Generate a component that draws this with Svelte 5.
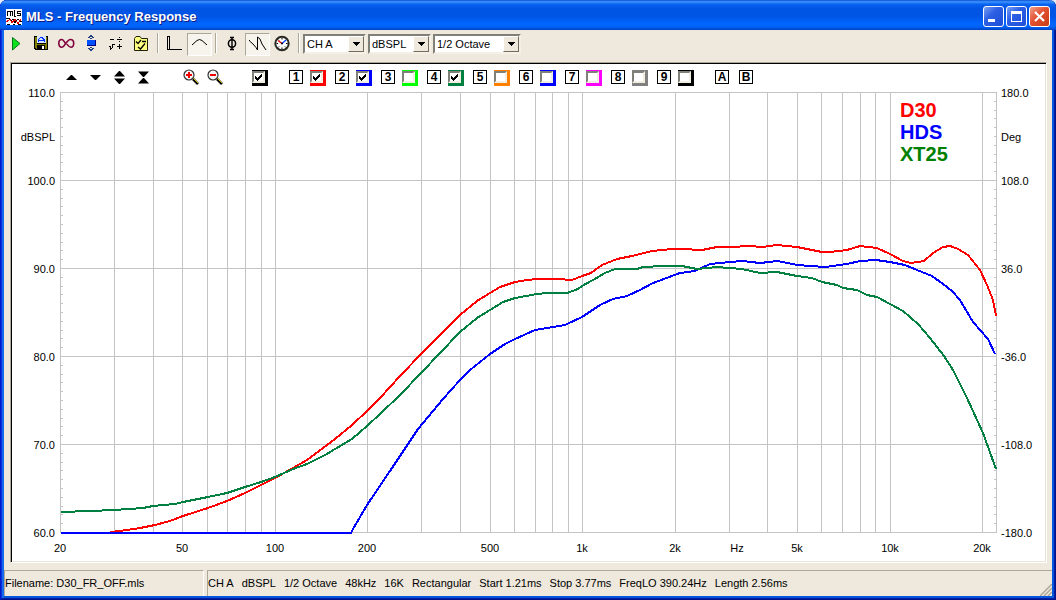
<script lang="ts">
  type Channel = { id: number; color: string; on: boolean };
  type Trace = { name: string; color: string; ink: string; points: string };

  const channels: Channel[] = $state([
    { id: 1, color: '#ff0000', on: true },
    { id: 2, color: '#0000ff', on: true },
    { id: 3, color: '#00ff00', on: false },
    { id: 4, color: '#008040', on: true },
    { id: 5, color: '#ff8000', on: false },
    { id: 6, color: '#0000ff', on: false },
    { id: 7, color: '#ff00ff', on: false },
    { id: 8, color: '#808080', on: false },
    { id: 9, color: '#000000', on: false },
  ]);
  let current = $state(true);

  // trace points live on a 936 x 440 sheet: 20 Hz..22 kHz by 110..60 dB
  const SHEET_W = 936;
  const PLOT_H = 440;
  const traces: Trace[] = [
    {
      name: 'D30', color: '#ff0000', ink: '#ff0000',
      points: '50,440 60,439 80,436 95,433 110,429 123,424 148,416 167,409 185,401 201,393 215,386 233,376 247,368 267,353 275,347 292,333 307,319 320,306 340,284 362,261 380,243 400,223 417,209 430,201 440,195 455,190 467,188 477,187 497,187 512,188 522,184 531,181 542,173 557,167 572,164 592,159 612,157 622,157 642,158 657,155 670,155 690,154 702,155 717,153 737,155 762,160 770,160 787,158 800,154 817,156 830,162 843,169 851,171 864,169 873,161 883,155 890,154 898,157 908,163 920,178 927,193 933,208 936,224',
    },
    {
      name: 'HDS', color: '#0000ff', ink: '#0000ff',
      points: '1,441 291,441 293,437 307,413 330,379 358,337 383,307 400,288 410,278 430,262 445,252 455,247 475,238 505,233 522,225 540,213 553,207 567,204 580,198 593,191 620,181 635,179 650,172 660,171 682,169 700,171 718,169 737,173 765,175 787,172 800,169 816,168 830,170 845,173 857,178 872,184 883,192 892,199 900,208 913,230 928,247 935,262',
    },
    {
      name: 'XT25', color: '#008040', ink: '#008000',
      points: '1,420 30,419 54,418 83,416 93,414 115,412 123,410 148,405 167,401 185,395 201,390 215,385 233,377 247,372 267,362 275,357 292,347 307,334 320,322 340,303 362,280 380,261 400,240 417,226 430,218 443,210 455,206 477,202 487,201 507,201 518,197 522,194 533,188 545,181 555,177 577,177 583,175 603,174 622,174 637,177 657,175 682,177 700,181 717,180 737,184 752,186 762,190 777,193 783,196 797,198 807,203 817,205 830,212 843,219 858,232 870,246 884,264 893,278 907,306 923,341 936,377',
    },
  ];

  const DECADES = Math.log10(22200 / 20);
  const freqs = [
    ...[30, 40, 50, 60, 70, 80, 90],
    ...[100, 200, 300, 400, 500, 600, 700, 800, 900],
    ...[1000, 2000, 3000, 4000, 5000, 6000, 7000, 8000, 9000],
    ...[10000, 20000],
  ];
  const freqLabels: [number, string][] = [
    [20, '20'], [50, '50'], [100, '100'], [200, '200'], [500, '500'], [1000, '1k'],
    [2000, '2k'], [3200, 'Hz'], [5000, '5k'], [10000, '10k'], [20000, '20k'],
  ];
  const levels = ['110.0', '100.0', '90.0', '80.0', '70.0', '60.0'];
  const degrees = ['180.0', '108.0', '36.0', '-36.0', '-108.0', '-180.0'];
  const ticks = Array.from({ length: 51 }, (_, i) => i);

  const LEFT = 48;
  const RIGHT = 49;
  let chartW = $state(1033);
  let plotW = $derived(chartW - LEFT - RIGHT);

  function fx(f: number) {
    return LEFT + Math.round((Math.log10(f / 20) / DECADES) * plotW);
  }
  function dy(db: number) {
    return Math.round((db * PLOT_H) / 50);
  }

  const status = ['CH A', 'dBSPL', '1/2 Octave', '48kHz', '16K', 'Rectangular', 'Start 1.21ms', 'Stop 3.77ms', 'FreqLO 390.24Hz', 'Length 2.56ms'];
</script>

{#snippet combo(label: string, options: string[], size: string)}
  <div class="combo {size}">
    <select aria-label={label}>
      {#each options as o}<option>{o}</option>{/each}
    </select>
    <span class="drop" aria-hidden="true">
      <svg width="7" height="4" viewBox="0 0 7 4"><path d="M0 0h7v1h-1v1h-1v1h-1v1h-1v-1h-1v-1h-1v-1h-1z" /></svg>
    </span>
  </div>
{/snippet}

{#snippet tick()}
  <svg class="tick" width="7" height="7" viewBox="0 0 7 7" aria-hidden="true">
    <path d="M0 2h1v1h1v1h1v-1h1v-1h1v-1h1v-1h1v3h-1v1h-1v1h-1v1h-1v1h-1v-1h-1v-1h-1z" />
  </svg>
{/snippet}

<div class="window">
  <header class="titlebar">
    <svg width="16" height="16" viewBox="0 0 16 16" shape-rendering="crispEdges" aria-hidden="true">
      <rect width="16" height="16" fill="#fff" />
      <path d="M1.500 7V2.500H6.500V7M4 2.500V7M8.500 1V7H10M14.500 2.500H11.500V4.500H14.500V6.500H11M0 9.500H3L5 12L7 10L9 14L12 10L14 12H16" fill="none" stroke="#000" />
      <path d="M0 13L4 10.500L6 13.500L9 10.500L12 14.500L15 10" fill="none" stroke="#e00000" />
      <path d="M1 15h3M7 15h2M12 15h3" stroke="#000" />
    </svg>
    <h1>MLS - Frequency Response</h1>
    <div class="caption">
      <button aria-label="Minimize"><svg viewBox="0 0 19 19"><rect x="4" y="12" width="7" height="3" fill="#fff" /></svg></button>
      <button aria-label="Maximize"><svg viewBox="0 0 19 19"><path d="M4 4h11v11h-11zM5 7v7h9v-7z" fill="#fff" fill-rule="evenodd" /></svg></button>
      <button class="close" aria-label="Close"><svg viewBox="0 0 19 19"><path d="M5 5L14 14M14 5L5 14" stroke="#fff" stroke-width="2.200" /></svg></button>
    </div>
  </header>

  <div class="toolbar" role="toolbar" aria-label="Analysis">
    <button aria-label="Run">
      <svg viewBox="0 0 17 17"><path d="M4.500 1.500L12 7.500L4.500 14z" fill="#10e020" stroke="#087818" /></svg>
    </button>
    <button aria-label="Save">
      <svg viewBox="0 0 17 17" shape-rendering="crispEdges">
        <path d="M1 0h14v14h-13l-1-1z" fill="#000" />
        <path d="M2 1h2v7h9v-7h1v12h-2v-4h-8v4h-1l-1-1z" fill="#808000" />
        <rect x="4" y="0" width="9" height="7" fill="#d8e4ff" />
        <path d="M5.500 6V3.500L7.500 1.500H9L11 3.500V6M5.500 4.500H11" fill="none" stroke="#0030ff" />
        <rect x="9" y="10" width="2" height="3" fill="#fff" />
      </svg>
    </button>
    <button aria-label="Loop">
      <svg viewBox="0 0 17 17"><path d="M7.500 7.500C6 5 5 3.500 3.800 3.500C2 3.500 .8 5.200 .8 7.300C.8 9.500 2 11.200 3.800 11.200C7 11.200 8.500 3.500 12.500 3.500C14.500 3.500 15.700 5 15.700 7.200C15.700 9.500 14.500 11.200 12.800 11.200C11.200 11.200 10 9.500 8.800 8" fill="none" stroke="#800040" stroke-width="1.600" /></svg>
    </button>
    <button aria-label="Scale input">
      <svg viewBox="0 0 17 17" shape-rendering="crispEdges">
        <path d="M5 1h1v-1h1v-1h2v1h1v1h1v1h-2v-1h-2v1h-2zM7 2h2v1h-2zM5 12h2v1h2v-1h2v1h-1v1h-1v1h-2v-1h-1v-1h-1zM7 11h2v1h-2z" fill="#204080" />
        <rect x="4" y="4" width="9" height="6" fill="#000080" />
        <rect x="4" y="4" width="8" height="5" fill="#0050ff" />
      </svg>
    </button>
    <button aria-label="Math">
      <svg viewBox="0 0 17 17" shape-rendering="crispEdges"><path d="M2 3h4v1h-4zM9 3h5v1h-5zM11 1h1v1h-1zM11 5h1v1h-1zM1 10h2v3h-1v-2h-1zM3 12h1v1h-1v1h-1v-1h1zM4 8h3v1h-2v3h-1zM9 10h5v1h-5zM11 8h1v5h-1z" /></svg>
    </button>
    <button aria-label="Options">
      <svg viewBox="0 0 17 17">
        <path d="M1.500 2.500L3 .5H7L8.500 2.500H14.500V14.500H1.500z" fill="#ffff80" stroke="#202000" />
        <path d="M3 5.500L5 7.500L8 4M9 5.500h4M5 11L7.500 13L12 7.500" fill="none" stroke="#000" stroke-width="1.300" />
      </svg>
    </button>
    <span class="sep"></span>
    <button aria-label="Time domain">
      <svg viewBox="0 0 17 17" shape-rendering="crispEdges"><path d="M1.500 0V13.500H16M1 .500H4M3.500 0V13" fill="none" stroke="#000" /></svg>
    </button>
    <button class="pressed" aria-label="Frequency domain" aria-pressed="true">
      <svg viewBox="0 0 17 17"><path d="M1 9L6 4.500Q8.500 2.500 11 4.500L16 9" fill="none" stroke="#000" /></svg>
    </button>
    <span class="sep"></span>
    <button aria-label="Phase">
      <svg viewBox="0 0 17 17"><path d="M8 1V14M6 1.500H10M6 13.500H10" stroke="#000" stroke-width="1.400" /><ellipse cx="8" cy="7.500" rx="3.600" ry="3.800" fill="none" stroke="#000" stroke-width="1.500" /></svg>
    </button>
    <button class="pressed" aria-label="Minimum phase" aria-pressed="true">
      <svg viewBox="0 0 17 17"><path d="M.5 4V5L4 8L7 11.500L8.500 14V1L11 3L13 8L17 14" fill="none" stroke="#000" /></svg>
    </button>
    <button aria-label="Timing">
      <svg viewBox="0 0 17 17">
        <circle cx="8" cy="7.500" r="6.700" fill="#fff" stroke="#282820" stroke-width="2" />
        <path d="M8 2V3.500M8 11.500V13M2.500 7.500H4M12 7.500H13.500M4 3.500L5 4.500M12 11.500L11 10.500M4 11.500L5 10.500" stroke="#000" />
        <path d="M8 7.500L4 4.500" stroke="#f00000" stroke-width="1.300" />
        <path d="M8 7.500L12 4" stroke="#0040ff" stroke-width="1.300" />
        <circle cx="8" cy="7.500" r="1" />
      </svg>
    </button>
    <span class="sep"></span>
    <div class="combos">
      {@render combo('Channel', ['CH A', 'CH B'], 'narrow')}
      {@render combo('Units', ['dBSPL', 'dBV'], 'narrow')}
      {@render combo('Smoothing', ['1/2 Octave', '1/3 Octave'], 'wide')}
    </div>
  </div>

  <main class="panel">
    <div class="controls">
      <div class="group">
        <button aria-label="Shift up"><svg viewBox="0 0 11 13"><path d="M5 4h1l5 5h-11z" /></svg></button>
        <button aria-label="Shift down"><svg viewBox="0 0 11 13"><path d="M0 4h11l-5 5h-1z" /></svg></button>
        <button aria-label="Expand"><svg viewBox="0 0 11 13"><path d="M5 0h1l5 5.500h-11zM0 7.500h11l-5 5.500h-1z" /></svg></button>
        <button aria-label="Compress"><svg viewBox="0 0 11 13"><path d="M0 0.500h11l-5 5.500h-1zM5 7h1l5 5.500h-11z" /></svg></button>
      </div>
      <div class="group zooms">
        {#each ['in', 'out'] as dir}
          <button aria-label="Zoom {dir}">
            <svg class="lens" viewBox="0 0 16 16">
              <path d="M10 10L15 15" stroke="#000" stroke-width="2.600" />
              <path d="M10.500 9.500L15 14" stroke="#e0c000" />
              <circle cx="6" cy="6" r="5" fill="#f4f4f4" stroke="#303030" stroke-width="1.200" />
              <path d={dir === 'in' ? 'M3 6H9M6 3V9' : 'M3 6H9'} stroke="#f00000" stroke-width="2" />
            </svg>
          </button>
        {/each}
      </div>
      <label class="check current">
        <input type="checkbox" bind:checked={current} aria-label="Current measurement" />
        {#if current}{@render tick()}{/if}
      </label>
      <div class="channels">
        {#each channels as ch (ch.id)}
          <div class="channel">
            <button class="key">{ch.id}</button>
            <label class="check" style="background:{ch.color}">
              <input type="checkbox" bind:checked={ch.on} aria-label="Show overlay {ch.id}" />
              {#if ch.on}{@render tick()}{/if}
            </label>
          </div>
        {/each}
      </div>
      <div class="cursors">
        <button class="key">A</button>
        <button class="key">B</button>
      </div>
    </div>

    <div class="chart" bind:clientWidth={chartW}>
      <svg class="plot" width={chartW} height="469" role="img" aria-label="Frequency response">
        <g class="grid">
          {#each freqs as f}
            <path d="M{fx(f) + 0.5} 0v{PLOT_H}" />
          {/each}
          {#each levels as _, i}
            <path d="M{LEFT} {dy(i * 10) + 0.5}h{plotW + 1}" />
          {/each}
          {#each ticks as t}
            <path d="M{LEFT} {dy(t) + 0.5}h3M{LEFT + plotW + 1} {dy(t) + 0.5}h-3" />
          {/each}
          <path d="M{LEFT + 0.5} 0v{PLOT_H}M{LEFT + plotW + 0.5} 0v{PLOT_H + 1}" />
        </g>
        <svg class="traces" x={LEFT} y="0" width={plotW} height={PLOT_H} viewBox="0 0 {SHEET_W} {PLOT_H}" preserveAspectRatio="none">
          {#each traces as t}
            <polyline points={t.points} stroke={t.color} />
          {/each}
        </svg>
        {#each levels as l, i}
          <text class="end" x={LEFT - 5} y={dy(i * 10) + 5}>{l}</text>
        {/each}
        {#each degrees as d, i}
          <text x={LEFT + plotW + 5} y={dy(i * 10) + 5}>{d}</text>
        {/each}
        <text class="end" x={LEFT - 5} y={dy(5) + 5}>dBSPL</text>
        <text x={LEFT + plotW + 5} y={dy(5) + 5}>Deg</text>
        {#each freqLabels as [f, text]}
          <text class="mid" x={fx(f)} y={PLOT_H + 20}>{text}</text>
        {/each}
        {#each traces as t, i}
          <text class="legend" x={LEFT + plotW - 96} y={25 + i * 22} fill={t.ink}>{t.name}</text>
        {/each}
      </svg>
    </div>
  </main>

  <footer class="status">
    <div class="cell file">Filename: D30_FR_OFF.mls</div>
    <div class="cell info">
      {#each status as s}<span>{s}</span>{/each}
    </div>
    <svg class="grip" width="12" height="12" viewBox="0 0 12 12" aria-hidden="true">
      <path d="M0 12L12 0M4 12L12 4M8 12L12 8" stroke="#aca899" stroke-width="1.500" />
    </svg>
  </footer>
</div>

<style>
  :global(body) { margin: 0; background: #e8ecf4; }

  .window {
    box-sizing: border-box;
    min-height: 100vh;
    padding: 0 4px 4px;
    border-radius: 7px 7px 0 0;
    background: #efe8dc;
    box-shadow: inset 1px 0 #0019cf, inset -1px -1px #00138c, inset 2px 0 #0831d9, inset -2px -2px #001ea0,
      inset 4px 0 #166aee, inset -4px -4px #0855dd;
    font: 11px/13px 'Liberation Sans', Arial, sans-serif;
    color: #000;
  }

  button { padding: 0; border: 0; background: none; font: inherit; color: inherit; }

  .titlebar {
    display: flex;
    align-items: center;
    box-sizing: border-box;
    height: 30px;
    margin: 0 -4px;
    padding: 3px 6px 0;
    border-radius: 7px 7px 0 0;
    background: linear-gradient(#0a50d0 0, #3d95ff 6%, #0a62f0 14%, #0054e3 30%, #0055e5 55%, #0066ff 80%, #0062f5 90%, #0040c0 100%);
  }
  .titlebar h1 {
    flex: 1;
    margin: 0 0 0 4px;
    font: bold 13px/16px 'Liberation Sans', Arial, sans-serif;
    color: #fff;
    text-shadow: 1px 1px #0a1883;
  }
  .caption { display: flex; gap: 2px; }
  .caption button {
    width: 21px;
    height: 21px;
    border: 1px solid #fff;
    border-radius: 3px;
    background: linear-gradient(135deg, #7aa0f4, #2c5fe4 40%, #1f4fd8);
  }
  .caption .close { background: linear-gradient(135deg, #f0a088, #e25030 45%, #c83c14); }
  .caption svg { display: block; width: 19px; height: 19px; }

  .toolbar { display: flex; padding-top: 3px; height: 23px; }
  .toolbar button {
    display: flex;
    align-items: center;
    justify-content: center;
    box-sizing: border-box;
    width: 25px;
    height: 23px;
    border: 1px solid transparent;
  }
  .toolbar button svg { width: 17px; height: 17px; overflow: visible; }
  .toolbar .pressed { border-color: #aca899 #fff #fff #aca899; background: #f7f4ee; }
  .sep { width: 8px; height: 20px; }
  .sep::after {
    content: '';
    display: block;
    width: 1px;
    height: 20px;
    margin-left: 3px;
    background: #aca899;
    box-shadow: 1px 0 #fff;
  }

  .combos { display: flex; gap: 2px; margin-top: 1px; }
  .combo { position: relative; height: 20px; }
  .narrow { width: 63px; }
  .wide { width: 88px; }
  .combo select {
    appearance: none;
    display: block;
    box-sizing: border-box;
    width: 100%;
    height: 20px;
    padding: 0 18px 0 2px;
    border: 2px solid;
    border-color: #808078 #f4f0e8 #f4f0e8 #808078;
    border-radius: 0;
    background: #fff;
    font: inherit;
    color: #000;
  }
  .drop {
    position: absolute;
    top: 2px;
    right: 2px;
    display: flex;
    align-items: center;
    justify-content: center;
    box-sizing: border-box;
    width: 16px;
    height: 16px;
    border: 1px solid;
    border-color: #fff #706c60 #706c60 #fff;
    background: #efe8dc;
    pointer-events: none;
  }

  .panel {
    margin: 6px 5px 0 6px;
    border: 1px solid;
    border-color: #aca899 #fff #fff #aca899;
    background: #fff;
    box-shadow: inset 1px 1px #000, inset -1px -1px #e8e4d8;
    padding: 1px;
  }

  .controls { display: flex; align-items: center; height: 28px; padding-left: 47px; }
  .group { display: flex; margin-bottom: 2px; }
  .group button { display: flex; align-items: center; justify-content: center; width: 24px; height: 24px; }
  .group svg { width: 11px; height: 13px; }
  .group .lens { width: 16px; height: 16px; }
  .zooms { margin-left: 24px; }

  .key {
    box-sizing: border-box;
    width: 14px;
    height: 14px;
    border: 1px solid #000;
    font: bold 12px/12px 'Liberation Sans', Arial, sans-serif;
    text-align: center;
  }
  .check { position: relative; display: block; width: 16px; height: 16px; background: #000; }
  .check input {
    appearance: none;
    display: block;
    box-sizing: border-box;
    width: 13px;
    height: 12px;
    margin: 0;
    border: 2px solid;
    border-color: #808078 #f1efe2 #f1efe2 #808078;
    background: #fff;
  }
  .check { box-sizing: border-box; padding-top: 1px; }
  .tick { position: absolute; top: 4px; left: 3px; pointer-events: none; }
  .current { margin-left: 25px; }
  .channels { display: flex; gap: 9px; margin-left: 21px; }
  .channel { display: flex; gap: 7px; }
  .cursors { display: flex; gap: 10px; height: 16px; margin-left: 21px; }

  .plot { display: block; overflow: visible; }
  .grid path { fill: none; stroke: #c4c4c4; shape-rendering: crispEdges; }
  .traces { overflow: visible; }
  .traces polyline {
    fill: none;
    stroke-width: 2;
    vector-effect: non-scaling-stroke;
    shape-rendering: crispEdges;
  }
  .end { text-anchor: end; }
  .mid { text-anchor: middle; }
  .legend { font-size: 20px; font-weight: bold; }

  .status { position: relative; display: flex; gap: 3px; margin-top: 7px; height: 26px; }
  .cell {
    box-sizing: border-box;
    padding: 6px 0 0;
    border-top: 1px solid #aca899;
    border-left: 1px solid #aca899;
    white-space: nowrap;
  }
  .file { width: 200px; border-right: 1px solid #fff; }
  .info { flex: 1; display: flex; gap: 8px; }
  .grip { position: absolute; right: 0; bottom: 0; }
</style>
